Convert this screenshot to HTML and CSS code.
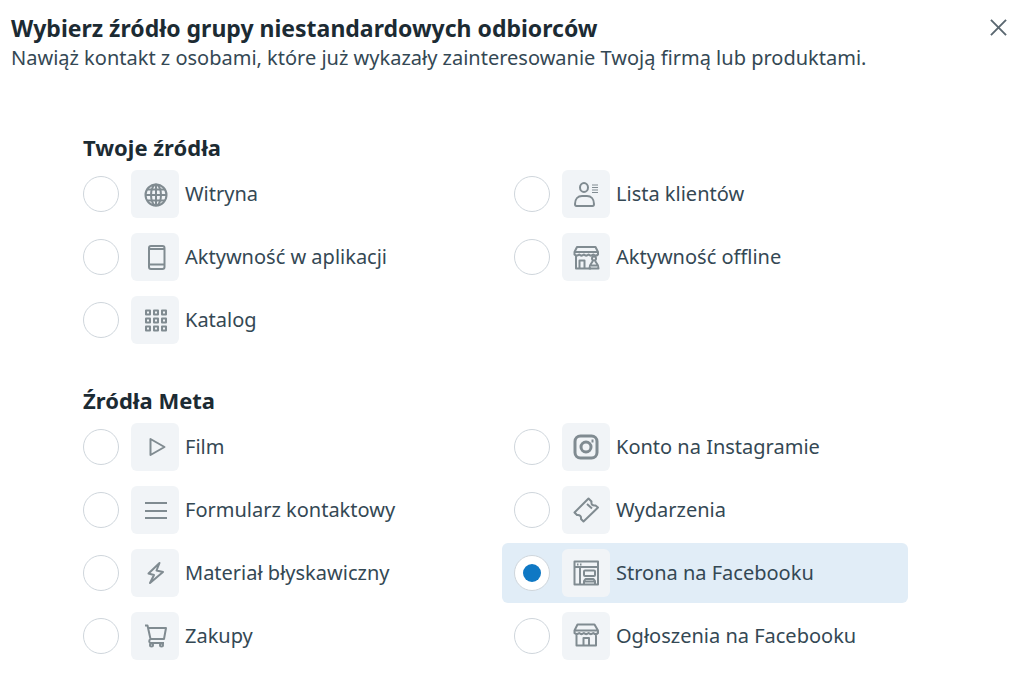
FILE: index.html
```html
<!DOCTYPE html>
<html lang="pl">
<head>
  <meta charset="UTF-8">
  <meta name="viewport" content="width=device-width, initial-scale=1.0">
  <title>Wybierz źródło grupy niestandardowych odbiorców</title>
  <link rel="stylesheet" href="styles.css">
</head>
<body>
  <header>
    <div class="heading">
      <h1>Wybierz źródło grupy niestandardowych odbiorców</h1>
      <p>Nawiąż kontakt z osobami, które już wykazały zainteresowanie Twoją firmą lub produktami.</p>
    </div>
    <button class="close" type="button" aria-label="Zamknij">
      <svg viewBox="0 0 18 18"><path d="M1 1l16 16M17 1L1 17"/></svg>
    </button>
  </header>

  <form class="sources">
    <section role="radiogroup" aria-labelledby="own-sources">
      <h2 id="own-sources">Twoje źródła</h2>
      <div class="options">
        <label class="option">
          <input type="radio" name="source" value="website">
          <span class="tile"><svg viewBox="0 0 28 28"><circle cx="15" cy="15" r="10.5"/><ellipse cx="15" cy="15" rx="5" ry="10.5"/><path d="M15 4v22M4 15h22M6 9.500h18M6 20.500h18"/></svg></span>
          <span>Witryna</span>
        </label>
        <label class="option">
          <input type="radio" name="source" value="customers">
          <span class="tile"><svg viewBox="0 0 28 28"><ellipse cx="12" cy="7.5" rx="4" ry="4.500"/><path d="M3 24c0-5 3-8 7-8h5c4 0 7 3 7 8 0 1.500-.5 2-1.500 2h-16C3.500 26 3 25.500 3 24z"/><path class="thin" d="M20 5h6M20 7.500h6M20 10h6M20 12.500h6"/></svg></span>
          <span>Lista klientów</span>
        </label>
        <label class="option">
          <input type="radio" name="source" value="app">
          <span class="tile"><svg viewBox="0 0 28 28"><rect x="8" y="3" width="15.500" height="23" rx="2"/><path d="M8 6h15.500M8 21.500h15.500"/></svg></span>
          <span>Aktywność w aplikacji</span>
        </label>
        <label class="option">
          <input type="radio" name="source" value="offline">
          <span class="tile"><svg viewBox="0 0 28 28"><path d="M5 4h18.500L26 9H2.500zM2.500 9v2.500c1.500 1.500 3 1.500 4.700 0 1.500 1.500 3 1.500 4.700 0 1.500 1.500 3 1.500 4.700 0 1.500 1.500 3 1.500 4.700 0 1.500 1.500 3.200 1.500 4.700 0V9M4 12.500v13h15M7.500 25.500v-8h5v8"/><circle cx="22" cy="15.500" r="2"/><path d="M20.500 18c0 2.500-3 2-3 7.500h9c0-5.500-3-5-3-7.500M19 22.500h6"/></svg></span>
          <span>Aktywność offline</span>
        </label>
        <label class="option">
          <input type="radio" name="source" value="catalog">
          <span class="tile"><svg viewBox="0 0 28 28"><path d="M5 4.500h4v4H5zM13 4.500h4v4h-4zM21 4.500h4v4h-4zM5 12.500h4v4H5zM13 12.500h4v4h-4zM21 12.500h4v4h-4zM5 20.500h4v4H5zM13 20.500h4v4h-4zM21 20.500h4v4h-4z"/></svg></span>
          <span>Katalog</span>
        </label>
      </div>
    </section>

    <section role="radiogroup" aria-labelledby="meta-sources">
      <h2 id="meta-sources">Źródła Meta</h2>
      <div class="options">
        <label class="option">
          <input type="radio" name="source" value="video">
          <span class="tile"><svg viewBox="0 0 28 28"><path d="M9.500 6v16L23.500 14z"/></svg></span>
          <span>Film</span>
        </label>
        <label class="option">
          <input type="radio" name="source" value="instagram">
          <span class="tile"><svg class="bold" viewBox="0 0 28 28"><rect x="3" y="3" width="22" height="22" rx="5.500"/><circle cx="14" cy="14" r="5"/><path d="M19.500 8h2"/></svg></span>
          <span>Konto na Instagramie</span>
        </label>
        <label class="option">
          <input type="radio" name="source" value="form">
          <span class="tile"><svg viewBox="0 0 28 28"><path d="M4 7h22M4 15h22M4 22h22"/></svg></span>
          <span>Formularz kontaktowy</span>
        </label>
        <label class="option">
          <input type="radio" name="source" value="events">
          <span class="tile"><svg viewBox="0 0 28 28"><path d="M16.500 2.500l3 3c-.5 3 1 4.500 4 4l2.500 2L11.500 25.500l-2.500-2.500c.5-3-1.500-4.500-4-4L2.500 16.500zM15 8l5 4.500"/></svg></span>
          <span>Wydarzenia</span>
        </label>
        <label class="option">
          <input type="radio" name="source" value="instant">
          <span class="tile"><svg viewBox="0 0 28 28"><path d="M18.500 4L7.500 14.500l5.500 1.500-4 8L22 13l-6.500-1.500z"/></svg></span>
          <span>Materiał błyskawiczny</span>
        </label>
        <label class="option">
          <input type="radio" name="source" value="page" checked>
          <span class="tile"><svg viewBox="0 0 28 28"><path d="M2.500 2.500h23.500v23H2.500zM2.500 8H26M8 8v17.500M5 5.500h1.500M8 5.500h1.500M12 25.500v-3.500l1.500-2h8l1.500 2v3.500M12 22.500h11"/><rect x="12" y="11.500" width="11" height="5.500" rx="1"/></svg></span>
          <span>Strona na Facebooku</span>
        </label>
        <label class="option">
          <input type="radio" name="source" value="shopping">
          <span class="tile"><svg viewBox="0 0 28 28"><path d="M4 3.500h2.500l3 13.500h13.500l2-11H7M9.500 17c-2 1.500-1.500 4 .5 4h13"/><circle cx="10.500" cy="23" r="1.500"/><circle cx="20.500" cy="23" r="1.500"/></svg></span>
          <span>Zakupy</span>
        </label>
        <label class="option">
          <input type="radio" name="source" value="listings">
          <span class="tile"><svg viewBox="0 0 28 28"><path d="M5.500 2.500h17L26 8.500H2.500zM2.500 8.500V11c1.500 1.500 3 1.500 4.700 0 1.500 1.500 3 1.500 4.700 0 1.500 1.500 3 1.500 4.700 0 1.500 1.500 3 1.500 4.700 0 1.500 1.500 3.200 1.500 4.700 0V8.500M4.500 12v11.500H24V12M11.500 23.500V16H17v7.500"/></svg></span>
          <span>Ogłoszenia na Facebooku</span>
        </label>
      </div>
    </section>
  </form>
</body>
</html>
```

FILE: styles.css
```css
* {
  margin: 0;
  padding: 0;
  box-sizing: border-box;
}

body {
  font-family: 'Noto Sans', sans-serif;
  font-size: 20px;
  line-height: 30px;
  background: #fff;
  color: #344854;
}

header {
  display: flex;
  justify-content: space-between;
  align-items: flex-start;
  padding: 13px 12px 0 11px;
}

h1,
h2 {
  font-size: 22px;
  font-weight: 700;
  line-height: 30px;
  color: #1c2b33;
}

h1 {
  font-size: 23px;
}

.close {
  display: flex;
  padding: 6px 5px;
  border: 0;
  background: none;
  cursor: pointer;
}

.close svg {
  width: 17px;
  height: 17px;
  fill: none;
  stroke: #5a6770;
  stroke-width: 2;
}

.sources {
  display: flex;
  flex-direction: column;
  gap: 35px;
  padding: 59px 116px 28px 71px;
}

h2 {
  margin-bottom: 2px;
  padding-left: 12px;
}

.options {
  display: grid;
  grid-template-columns: 1fr 1fr;
  gap: 3px 25px;
}

.option {
  display: flex;
  align-items: center;
  min-height: 60px;
  padding: 6px 12px;
  border-radius: 6px;
  cursor: pointer;
}

.option:has(input:checked) {
  background: #e1edf7;
}

.option input {
  appearance: none;
  display: grid;
  place-items: center;
  flex-shrink: 0;
  width: 36px;
  height: 36px;
  margin-right: 12px;
  border: 1px solid #cfd6dc;
  border-radius: 50%;
  background: #fff;
}

.option input:checked::before {
  content: "";
  width: 18px;
  height: 18px;
  border-radius: 50%;
  background: #0f78c4;
}

.tile {
  display: grid;
  place-items: center;
  flex-shrink: 0;
  width: 48px;
  height: 48px;
  margin-right: 6px;
  border-radius: 6px;
  background: #f1f4f7;
}

.tile svg {
  width: 28px;
  height: 28px;
  fill: none;
  stroke: #808b91;
  stroke-width: 2;
  stroke-linejoin: round;
}

.tile .bold {
  stroke-width: 3;
}

.tile .thin {
  stroke-width: 1;
}

@media (max-width: 800px) {
  .sources {
    padding-left: 0;
    padding-right: 12px;
  }

  .options {
    grid-template-columns: 1fr;
  }
}
```
